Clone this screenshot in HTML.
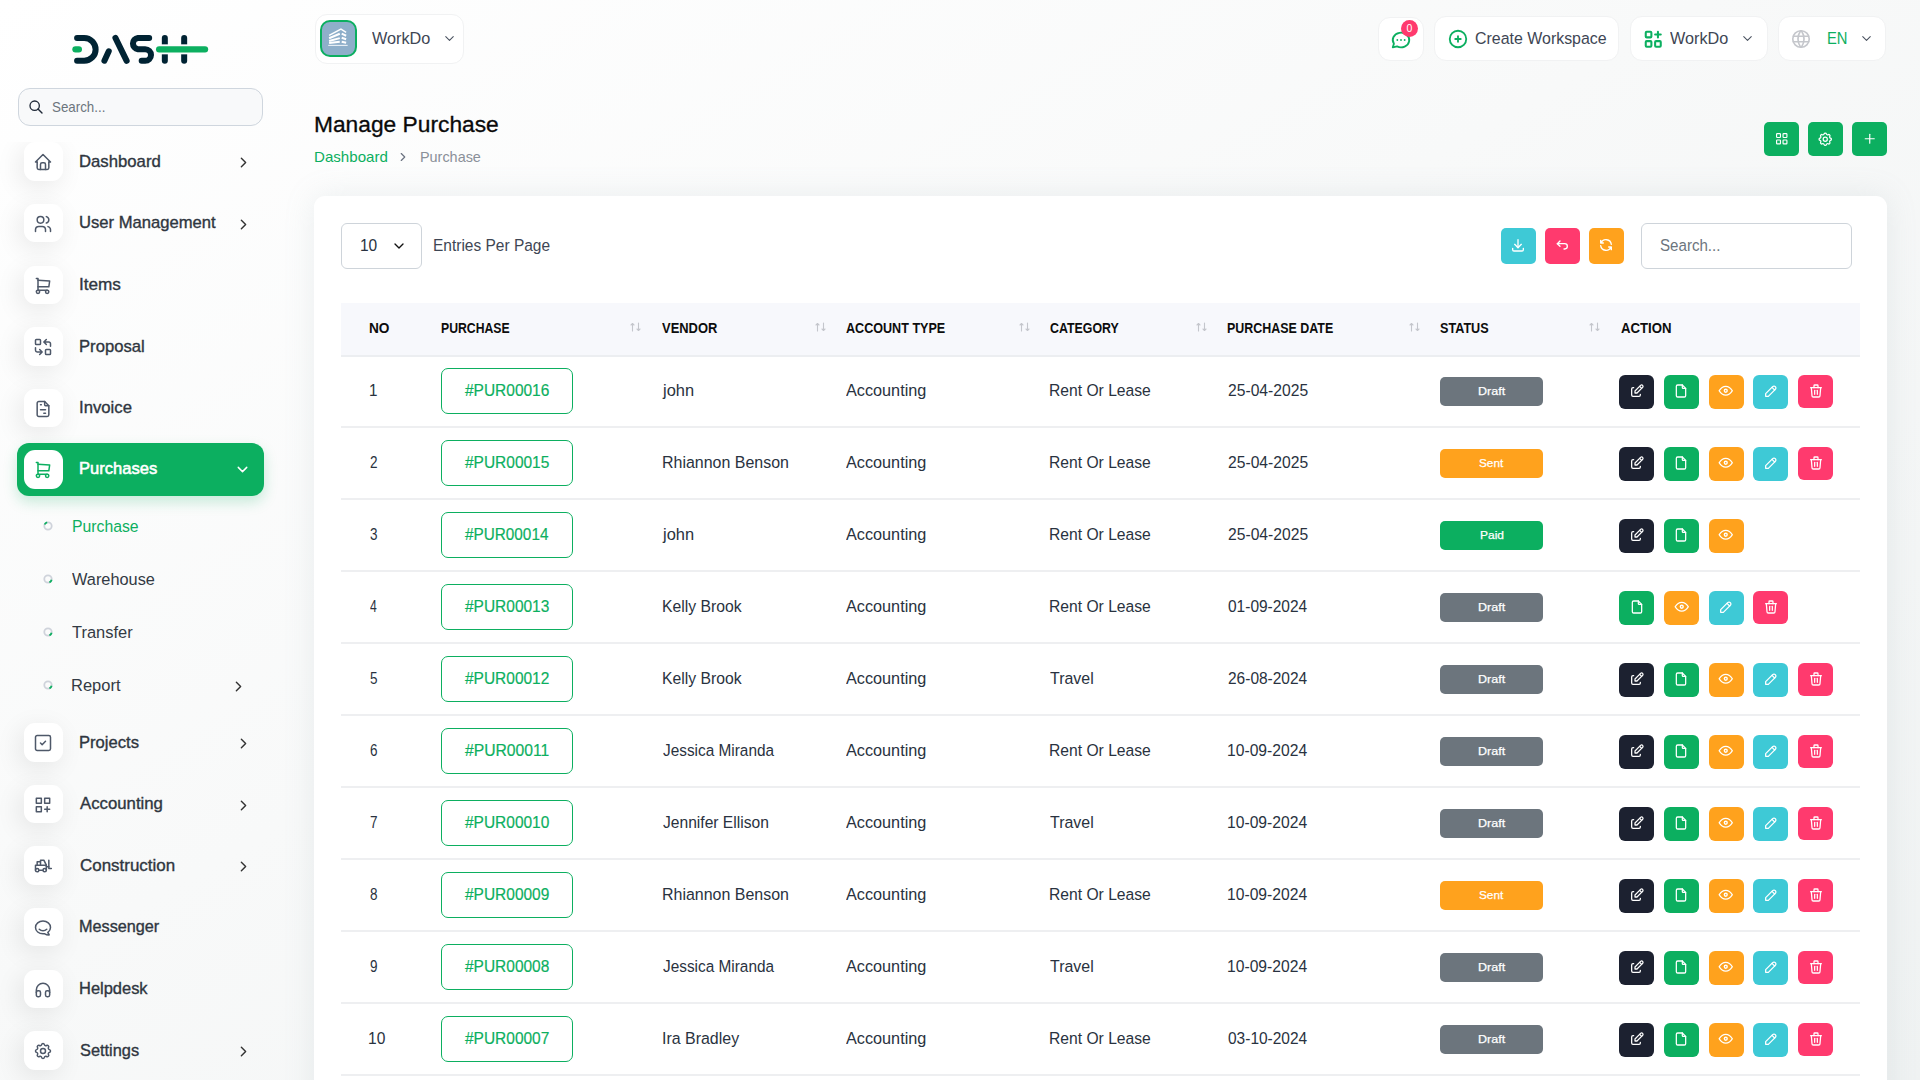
<!DOCTYPE html>
<html><head><meta charset="utf-8"><title>Manage Purchase</title>
<style>
html,body{margin:0;padding:0}
body{width:1920px;height:1080px;overflow:hidden;position:relative;font-family:"Liberation Sans",sans-serif;
background:linear-gradient(150deg,#ffffff 0%,#f8f9f9 45%,#eff2f2 100%)}
.t{position:absolute;line-height:1;white-space:nowrap;transform-origin:0 0}
svg{display:block}
</style></head><body>
<svg style="position:absolute;left:60px;top:20px" width="160" height="60" viewBox="0 0 1920 720" fill="none" stroke-linecap="round" stroke-linejoin="round">
<g stroke="#002333" stroke-width="72">
<path d="M205 215H290A137 137 0 0 1 290 490H205"/>
<path d="M533 488L585 375"/>
<path d="M665 215L800 490"/>
<path d="M1070 215H935A68 68 0 0 0 935 350H1022A70 70 0 0 1 1022 490H980"/>
<path d="M1258 215V490"/><path d="M1490 215V490"/>
</g>
<rect x="1200" y="292" width="340" height="120" fill="#fdfdfd"/>
<g stroke="#0caf60" stroke-width="76">
<path d="M186 352H226"/><path d="M1190 352H1740"/>
</g></svg><div style="position:absolute;left:18px;top:88px;width:245px;height:37.5px;box-sizing:border-box;border:1px solid #cfd6de;border-radius:12px;background:#f8f9fa"></div><svg style="position:absolute;left:28.00px;top:98.50px;" width="16" height="16" viewBox="0 0 24 24" fill="none" stroke="#1f2937" stroke-width="2" stroke-linecap="round" stroke-linejoin="round"><path d="M10 10m-7 0a7 7 0 1 0 14 0a7 7 0 1 0 -14 0"/><path d="M21 21l-6 -6"/></svg><div class="t" style="left:51.70px;top:100px;font-size:14.6px;font-weight:400;color:#6c757d;transform:scaleX(0.9137);">Search...</div><div style="position:absolute;left:0;top:142px;width:300px;height:938px;overflow:hidden"><div style="position:absolute;left:0;top:-142px;width:300px;height:1080px"><div style="position:absolute;left:24px;top:142.29999999999998px;width:38.6px;height:38.6px;background:#fff;border-radius:11px;box-shadow:-4px 6px 26px rgba(0,0,0,0.085)"></div><svg style="position:absolute;left:33.30px;top:152.30px;" width="20" height="20" viewBox="0 0 24 24" fill="none" stroke="#4e5869" stroke-width="1.8" stroke-linecap="round" stroke-linejoin="round"><path d="M5 12l-2 0l9 -9l9 9l-2 0"/><path d="M5 12v7a2 2 0 0 0 2 2h10a2 2 0 0 0 2 -2v-7"/><path d="M9 21v-6a2 2 0 0 1 2 -2h2a2 2 0 0 1 2 2v6"/></svg><div class="t" style="left:78.68px;top:153px;font-size:16.4px;font-weight:400;color:#2f3640;transform:scaleX(1.0194);-webkit-text-stroke:0.35px #2f3640;">Dashboard</div><svg style="position:absolute;left:235.20px;top:154.40px;" width="17" height="17" viewBox="0 0 24 24" fill="none" stroke="#333333" stroke-width="2" stroke-linecap="round" stroke-linejoin="round"><path d="M9 6l6 6l-6 6"/></svg><div style="position:absolute;left:24px;top:203.89999999999998px;width:38.6px;height:38.6px;background:#fff;border-radius:11px;box-shadow:-4px 6px 26px rgba(0,0,0,0.085)"></div><svg style="position:absolute;left:33.30px;top:213.90px;" width="20" height="20" viewBox="0 0 24 24" fill="none" stroke="#4e5869" stroke-width="1.8" stroke-linecap="round" stroke-linejoin="round"><path d="M9 7m-4 0a4 4 0 1 0 8 0a4 4 0 1 0 -8 0"/><path d="M3 21v-2a4 4 0 0 1 4 -4h4a4 4 0 0 1 4 4v2"/><path d="M16 3.13a4 4 0 0 1 0 7.75"/><path d="M21 21v-2a4 4 0 0 0 -3 -3.85"/></svg><div class="t" style="left:78.69px;top:214px;font-size:16.4px;font-weight:400;color:#2f3640;transform:scaleX(1.0128);-webkit-text-stroke:0.35px #2f3640;">User Management</div><svg style="position:absolute;left:235.20px;top:216.00px;" width="17" height="17" viewBox="0 0 24 24" fill="none" stroke="#333333" stroke-width="2" stroke-linecap="round" stroke-linejoin="round"><path d="M9 6l6 6l-6 6"/></svg><div style="position:absolute;left:24px;top:265.5px;width:38.6px;height:38.6px;background:#fff;border-radius:11px;box-shadow:-4px 6px 26px rgba(0,0,0,0.085)"></div><svg style="position:absolute;left:33.30px;top:275.50px;" width="20" height="20" viewBox="0 0 24 24" fill="none" stroke="#4e5869" stroke-width="1.8" stroke-linecap="round" stroke-linejoin="round"><path d="M6 19m-2 0a2 2 0 1 0 4 0a2 2 0 1 0 -4 0"/><path d="M17 19m-2 0a2 2 0 1 0 4 0a2 2 0 1 0 -4 0"/><path d="M17 17h-11v-14h-2"/><path d="M6 5l14 1l-1 7h-13"/></svg><div class="t" style="left:78.65px;top:276px;font-size:16.4px;font-weight:400;color:#2f3640;transform:scaleX(1.0469);-webkit-text-stroke:0.35px #2f3640;">Items</div><div style="position:absolute;left:24px;top:327.09999999999997px;width:38.6px;height:38.6px;background:#fff;border-radius:11px;box-shadow:-4px 6px 26px rgba(0,0,0,0.085)"></div><svg style="position:absolute;left:33.30px;top:337.10px;" width="20" height="20" viewBox="0 0 24 24" fill="none" stroke="#4e5869" stroke-width="1.8" stroke-linecap="round" stroke-linejoin="round"><path d="M3 3m0 1a1 1 0 0 1 1 -1h4a1 1 0 0 1 1 1v4a1 1 0 0 1 -1 1h-4a1 1 0 0 1 -1 -1z"/><path d="M15 15m0 1a1 1 0 0 1 1 -1h4a1 1 0 0 1 1 1v4a1 1 0 0 1 -1 1h-4a1 1 0 0 1 -1 -1z"/><path d="M21 11v-3a2 2 0 0 0 -2 -2h-6l3 3m0 -6l-3 3"/><path d="M3 13v3a2 2 0 0 0 2 2h6l-3 -3m0 6l3 -3"/></svg><div class="t" style="left:78.68px;top:338px;font-size:16.4px;font-weight:400;color:#2f3640;transform:scaleX(1.0151);-webkit-text-stroke:0.35px #2f3640;">Proposal</div><div style="position:absolute;left:24px;top:388.7px;width:38.6px;height:38.6px;background:#fff;border-radius:11px;box-shadow:-4px 6px 26px rgba(0,0,0,0.085)"></div><svg style="position:absolute;left:33.30px;top:398.70px;" width="20" height="20" viewBox="0 0 24 24" fill="none" stroke="#4e5869" stroke-width="1.8" stroke-linecap="round" stroke-linejoin="round"><path d="M14 3v4a1 1 0 0 0 1 1h4"/><path d="M17 21h-10a2 2 0 0 1 -2 -2v-14a2 2 0 0 1 2 -2h7l5 5v11a2 2 0 0 1 -2 2z"/><path d="M9 7l1 0"/><path d="M9 13l6 0"/><path d="M13 17l2 0"/></svg><div class="t" style="left:78.68px;top:399px;font-size:16.4px;font-weight:400;color:#2f3640;transform:scaleX(1.0193);-webkit-text-stroke:0.35px #2f3640;">Invoice</div><div style="position:absolute;left:17px;top:442.9px;width:247px;height:53px;background:#0caf60;border-radius:12px;box-shadow:0 6px 14px rgba(12,175,96,0.22)"></div><div style="position:absolute;left:24px;top:450.09999999999997px;width:38.6px;height:38.6px;background:#fff;border-radius:11px;"></div><svg style="position:absolute;left:33.30px;top:460.10px;" width="20" height="20" viewBox="0 0 24 24" fill="none" stroke="#0caf60" stroke-width="1.8" stroke-linecap="round" stroke-linejoin="round"><path d="M6 19m-2 0a2 2 0 1 0 4 0a2 2 0 1 0 -4 0"/><path d="M17 19m-2 0a2 2 0 1 0 4 0a2 2 0 1 0 -4 0"/><path d="M17 17h-11v-14h-2"/><path d="M6 5l14 1l-1 7h-13"/></svg><div class="t" style="left:79.19px;top:460px;font-size:16.4px;font-weight:400;color:#fff;transform:scaleX(1.0099);-webkit-text-stroke:0.55px #fff;">Purchases</div><svg style="position:absolute;left:233.80px;top:460.90px;" width="17" height="17" viewBox="0 0 24 24" fill="none" stroke="#fff" stroke-width="2" stroke-linecap="round" stroke-linejoin="round"><path d="M6 9l6 6l6 -6"/></svg><svg style="position:absolute;left:42.3px;top:520.2px" width="12" height="12" viewBox="0 0 12 12"><circle cx="6" cy="6" r="3.7" fill="none" stroke="#cfd3db" stroke-width="1.8"/><path d="M2.6 4.5A3.7 3.7 0 0 1 5.2 2.4" fill="none" stroke="#0caf60" stroke-width="1.8"/></svg><div class="t" style="left:71.97px;top:519px;font-size:16.9px;font-weight:400;color:#0caf60;transform:scaleX(0.9334);">Purchase</div><svg style="position:absolute;left:42.3px;top:573.2px" width="12" height="12" viewBox="0 0 12 12"><circle cx="6" cy="6" r="3.7" fill="none" stroke="#cfd3db" stroke-width="1.8"/><path d="M9.6 6.8A3.7 3.7 0 0 1 7.4 9.4" fill="none" stroke="#0caf60" stroke-width="1.8"/></svg><div class="t" style="left:71.80px;top:572px;font-size:16.9px;font-weight:400;color:#333a44;transform:scaleX(0.9666);">Warehouse</div><svg style="position:absolute;left:42.3px;top:626.2px" width="12" height="12" viewBox="0 0 12 12"><circle cx="6" cy="6" r="3.7" fill="none" stroke="#cfd3db" stroke-width="1.8"/><path d="M9.6 6.8A3.7 3.7 0 0 1 7.4 9.4" fill="none" stroke="#0caf60" stroke-width="1.8"/></svg><div class="t" style="left:71.80px;top:625px;font-size:16.9px;font-weight:400;color:#333a44;transform:scaleX(0.9739);">Transfer</div><svg style="position:absolute;left:42.3px;top:679.2px" width="12" height="12" viewBox="0 0 12 12"><circle cx="6" cy="6" r="3.7" fill="none" stroke="#cfd3db" stroke-width="1.8"/><path d="M9.6 6.8A3.7 3.7 0 0 1 7.4 9.4" fill="none" stroke="#0caf60" stroke-width="1.8"/></svg><div class="t" style="left:70.82px;top:678px;font-size:16.9px;font-weight:400;color:#333a44;transform:scaleX(0.9759);">Report</div><svg style="position:absolute;left:230.20px;top:677.80px;" width="17" height="17" viewBox="0 0 24 24" fill="none" stroke="#333333" stroke-width="2" stroke-linecap="round" stroke-linejoin="round"><path d="M9 6l6 6l-6 6"/></svg><div style="position:absolute;left:24px;top:723.1px;width:38.6px;height:38.6px;background:#fff;border-radius:11px;box-shadow:-4px 6px 26px rgba(0,0,0,0.085)"></div><svg style="position:absolute;left:33.30px;top:733.10px;" width="20" height="20" viewBox="0 0 24 24" fill="none" stroke="#4e5869" stroke-width="1.8" stroke-linecap="round" stroke-linejoin="round"><path d="M3 5a2 2 0 0 1 2 -2h14a2 2 0 0 1 2 2v14a2 2 0 0 1 -2 2h-14a2 2 0 0 1 -2 -2v-14z"/><path d="M9 12l2 2l4 -4"/></svg><div class="t" style="left:78.69px;top:734px;font-size:16.4px;font-weight:400;color:#2f3640;transform:scaleX(1.0136);-webkit-text-stroke:0.35px #2f3640;">Projects</div><svg style="position:absolute;left:235.20px;top:735.20px;" width="17" height="17" viewBox="0 0 24 24" fill="none" stroke="#333333" stroke-width="2" stroke-linecap="round" stroke-linejoin="round"><path d="M9 6l6 6l-6 6"/></svg><div style="position:absolute;left:24px;top:784.7px;width:38.6px;height:38.6px;background:#fff;border-radius:11px;box-shadow:-4px 6px 26px rgba(0,0,0,0.085)"></div><svg style="position:absolute;left:33.30px;top:794.70px;" width="20" height="20" viewBox="0 0 24 24" fill="none" stroke="#4e5869" stroke-width="1.8" stroke-linecap="round" stroke-linejoin="round"><path d="M4 4h6v6h-6z"/><path d="M14 4h6v6h-6z"/><path d="M4 14h6v6h-6z"/><path d="M14 17h6m-3 -3v6"/></svg><div class="t" style="left:79.70px;top:795px;font-size:16.4px;font-weight:400;color:#2f3640;transform:scaleX(1.0225);-webkit-text-stroke:0.35px #2f3640;">Accounting</div><svg style="position:absolute;left:235.20px;top:796.80px;" width="17" height="17" viewBox="0 0 24 24" fill="none" stroke="#333333" stroke-width="2" stroke-linecap="round" stroke-linejoin="round"><path d="M9 6l6 6l-6 6"/></svg><div style="position:absolute;left:24px;top:846.3000000000001px;width:38.6px;height:38.6px;background:#fff;border-radius:11px;box-shadow:-4px 6px 26px rgba(0,0,0,0.085)"></div><svg style="position:absolute;left:33.30px;top:856.30px;" width="20" height="20" viewBox="0 0 24 24" fill="none" stroke="#4e5869" stroke-width="1.8" stroke-linecap="round" stroke-linejoin="round"><path d="M5 17m-2 0a2 2 0 1 0 4 0a2 2 0 1 0 -4 0"/><path d="M14 17m-2 0a2 2 0 1 0 4 0a2 2 0 1 0 -4 0"/><path d="M7 17l5 0"/><path d="M3 17v-6h13v6"/><path d="M5 11v-4h4"/><path d="M9 11v-6h4l3 6"/><path d="M22 15h-3v-10"/><path d="M16 13l3 0"/></svg><div class="t" style="left:79.70px;top:857px;font-size:16.4px;font-weight:400;color:#2f3640;transform:scaleX(1.0338);-webkit-text-stroke:0.35px #2f3640;">Construction</div><svg style="position:absolute;left:235.20px;top:858.40px;" width="17" height="17" viewBox="0 0 24 24" fill="none" stroke="#333333" stroke-width="2" stroke-linecap="round" stroke-linejoin="round"><path d="M9 6l6 6l-6 6"/></svg><div style="position:absolute;left:24px;top:907.9000000000001px;width:38.6px;height:38.6px;background:#fff;border-radius:11px;box-shadow:-4px 6px 26px rgba(0,0,0,0.085)"></div><svg style="position:absolute;left:33.30px;top:917.90px;" width="20" height="20" viewBox="0 0 24 24" fill="none" stroke="#4e5869" stroke-width="1.8" stroke-linecap="round" stroke-linejoin="round"><path d="M17.802 17.292s.077 -.055 .2 -.149c1.843 -1.425 3 -3.49 3 -5.789c0 -4.286 -4.03 -7.764 -9 -7.764c-4.97 0 -9 3.478 -9 7.764c0 4.288 4.03 7.646 9 7.646c.424 0 1.12 -.028 2.088 -.084c1.262 .82 3.104 1.493 4.716 1.493c.499 0 .734 -.41 .414 -.828c-.486 -.596 -1.156 -1.551 -1.416 -2.29z"/><path d="M7.5 13.5c2.5 2.5 6.5 2.5 9 0"/></svg><div class="t" style="left:78.71px;top:918px;font-size:16.4px;font-weight:400;color:#2f3640;transform:scaleX(0.9898);-webkit-text-stroke:0.35px #2f3640;">Messenger</div><div style="position:absolute;left:24px;top:969.5px;width:38.6px;height:38.6px;background:#fff;border-radius:11px;box-shadow:-4px 6px 26px rgba(0,0,0,0.085)"></div><svg style="position:absolute;left:33.30px;top:979.50px;" width="20" height="20" viewBox="0 0 24 24" fill="none" stroke="#4e5869" stroke-width="1.8" stroke-linecap="round" stroke-linejoin="round"><path d="M4 13m0 2a2 2 0 0 1 2 -2h1a2 2 0 0 1 2 2v3a2 2 0 0 1 -2 2h-1a2 2 0 0 1 -2 -2z"/><path d="M15 13m0 2a2 2 0 0 1 2 -2h1a2 2 0 0 1 2 2v3a2 2 0 0 1 -2 2h-1a2 2 0 0 1 -2 -2z"/><path d="M4 15v-3a8 8 0 0 1 16 0v3"/></svg><div class="t" style="left:78.70px;top:980px;font-size:16.4px;font-weight:400;color:#2f3640;transform:scaleX(1.0039);-webkit-text-stroke:0.35px #2f3640;">Helpdesk</div><div style="position:absolute;left:24px;top:1031.1000000000001px;width:38.6px;height:38.6px;background:#fff;border-radius:11px;box-shadow:-4px 6px 26px rgba(0,0,0,0.085)"></div><svg style="position:absolute;left:33.30px;top:1041.10px;" width="20" height="20" viewBox="0 0 24 24" fill="none" stroke="#4e5869" stroke-width="1.8" stroke-linecap="round" stroke-linejoin="round"><path d="M10.325 4.317c.426 -1.756 2.924 -1.756 3.35 0a1.724 1.724 0 0 0 2.573 1.066c1.543 -.94 3.31 .826 2.37 2.37a1.724 1.724 0 0 0 1.065 2.572c1.756 .426 1.756 2.924 0 3.35a1.724 1.724 0 0 0 -1.066 2.573c.94 1.543 -.826 3.31 -2.37 2.37a1.724 1.724 0 0 0 -2.572 1.065c-.426 1.756 -2.924 1.756 -3.35 0a1.724 1.724 0 0 0 -2.573 -1.066c-1.543 .94 -3.31 -.826 -2.37 -2.37a1.724 1.724 0 0 0 -1.065 -2.572c-1.756 -.426 -1.756 -2.924 0 -3.35a1.724 1.724 0 0 0 1.066 -2.573c-.94 -1.543 .826 -3.31 2.37 -2.37c1 .608 2.296 .07 2.572 -1.065z"/><path d="M9 12a3 3 0 1 0 6 0a3 3 0 0 0 -6 0"/></svg><div class="t" style="left:79.70px;top:1042px;font-size:16.4px;font-weight:400;color:#2f3640;transform:scaleX(0.9978);-webkit-text-stroke:0.35px #2f3640;">Settings</div><svg style="position:absolute;left:235.20px;top:1043.20px;" width="17" height="17" viewBox="0 0 24 24" fill="none" stroke="#333333" stroke-width="2" stroke-linecap="round" stroke-linejoin="round"><path d="M9 6l6 6l-6 6"/></svg></div></div><div style="position:absolute;left:314.5px;top:13.5px;width:149px;height:50px;background:#fff;border-radius:12px;box-sizing:border-box;border:1px solid #f1f2f3"></div><div style="position:absolute;left:320px;top:20px;width:37px;height:37px;box-sizing:border-box;border:2px solid #0caf60;border-radius:10px;background:#8eafca"></div><svg style="position:absolute;left:322px;top:22px" width="32" height="32" viewBox="0 0 1080 1080" fill="none" stroke="#fff">
<path d="M240 450L640 240L815 350" stroke-width="45"/>
<path d="M240 548L600 398M665 395L815 465" stroke-width="68"/>
<path d="M240 642L600 545M665 530L815 580" stroke-width="68"/>
<path d="M240 712L600 668M665 665L815 700" stroke-width="68"/>
<path d="M210 790H865" stroke-width="38" stroke-opacity="0.8"/></svg><div class="t" style="left:372.30px;top:31px;font-size:16.9px;font-weight:400;color:#3e4654;transform:scaleX(0.9619);">WorkDo</div><svg style="position:absolute;left:442.20px;top:31.10px;" width="15" height="15" viewBox="0 0 24 24" fill="none" stroke="#4a5260" stroke-width="1.7" stroke-linecap="round" stroke-linejoin="round"><path d="M6 9l6 6l6 -6"/></svg><div style="position:absolute;left:1377.5px;top:17px;width:46.5px;height:43.5px;background:#fff;border-radius:12px;box-sizing:border-box;border:1px solid #f1f2f3"></div><svg style="position:absolute;left:1390.00px;top:29.20px;" width="22" height="22" viewBox="0 0 24 24" fill="none" stroke="#0caf60" stroke-width="2" stroke-linecap="round" stroke-linejoin="round"><path d="M3 20l1.3 -3.9a9 8 0 1 1 3.4 2.9l-4.7 1"/><path d="M12 12l0 .01"/><path d="M8 12l0 .01"/><path d="M16 12l0 .01"/></svg><div style="position:absolute;left:1401px;top:19.9px;width:17px;height:17px;border-radius:50%;background:#ff3a6e;color:#fff;font-size:10.5px;line-height:17px;text-align:center;font-family:'Liberation Sans',sans-serif">0</div><div style="position:absolute;left:1434.3px;top:16px;width:184.7px;height:45px;background:#fff;border-radius:12px;box-sizing:border-box;border:1px solid #f1f2f3"></div><svg style="position:absolute;left:1446.50px;top:28.00px;" width="22" height="22" viewBox="0 0 24 24" fill="none" stroke="#0caf60" stroke-width="2" stroke-linecap="round" stroke-linejoin="round"><path d="M3 12a9 9 0 1 0 18 0a9 9 0 0 0 -18 0"/><path d="M9 12h6"/><path d="M12 9v6"/></svg><div class="t" style="left:1475.00px;top:31px;font-size:16.9px;font-weight:400;color:#3e4654;transform:scaleX(0.9435);">Create Workspace</div><div style="position:absolute;left:1630.2px;top:16px;width:137.8px;height:45px;background:#fff;border-radius:12px;box-sizing:border-box;border:1px solid #f1f2f3"></div><svg style="position:absolute;left:1642.15px;top:28.05px;" width="22.5" height="22.5" viewBox="0 0 24 24" fill="none" stroke="#0caf60" stroke-width="2.2" stroke-linecap="round" stroke-linejoin="round"><path d="M4 4m0 1a1 1 0 0 1 1 -1h4a1 1 0 0 1 1 1v4a1 1 0 0 1 -1 1h-4a1 1 0 0 1 -1 -1z"/><path d="M4 14m0 1a1 1 0 0 1 1 -1h4a1 1 0 0 1 1 1v4a1 1 0 0 1 -1 1h-4a1 1 0 0 1 -1 -1z"/><path d="M14 14m0 1a1 1 0 0 1 1 -1h4a1 1 0 0 1 1 1v4a1 1 0 0 1 -1 1h-4a1 1 0 0 1 -1 -1z"/><path d="M14 7l6 0"/><path d="M17 4l0 6"/></svg><div class="t" style="left:1670.30px;top:31px;font-size:16.9px;font-weight:400;color:#3e4654;transform:scaleX(0.9602);">WorkDo</div><svg style="position:absolute;left:1740.00px;top:31.10px;" width="15" height="15" viewBox="0 0 24 24" fill="none" stroke="#4a5260" stroke-width="1.7" stroke-linecap="round" stroke-linejoin="round"><path d="M6 9l6 6l6 -6"/></svg><div style="position:absolute;left:1778.2px;top:16px;width:107.5px;height:45px;background:#fff;border-radius:12px;box-sizing:border-box;border:1px solid #f1f2f3"></div><svg style="position:absolute;left:1790.10px;top:28.00px;" width="22" height="22" viewBox="0 0 24 24" fill="none" stroke="#c5c7cc" stroke-width="1.8" stroke-linecap="round" stroke-linejoin="round"><path d="M3 12a9 9 0 1 0 18 0a9 9 0 0 0 -18 0"/><path d="M3.6 9h16.8"/><path d="M3.6 15h16.8"/><path d="M11.5 3a17 17 0 0 0 0 18"/><path d="M12.5 3a17 17 0 0 1 0 18"/></svg><div class="t" style="left:1826.94px;top:30px;font-size:17.1px;font-weight:400;color:#0caf60;transform:scaleX(0.8644);">EN</div><svg style="position:absolute;left:1858.90px;top:31.10px;" width="15" height="15" viewBox="0 0 24 24" fill="none" stroke="#4a5260" stroke-width="1.7" stroke-linecap="round" stroke-linejoin="round"><path d="M6 9l6 6l6 -6"/></svg><div class="t" style="left:313.79px;top:114px;font-size:22.6px;font-weight:400;color:#0a0a0a;transform:scaleX(1.0076);-webkit-text-stroke:0.3px #0a0a0a;">Manage Purchase</div><div class="t" style="left:313.53px;top:150px;font-size:14.1px;font-weight:400;color:#0caf60;transform:scaleX(1.0714);">Dashboard</div><svg style="position:absolute;left:396.40px;top:150.30px;" width="14" height="14" viewBox="0 0 24 24" fill="none" stroke="#6b7280" stroke-width="2" stroke-linecap="round" stroke-linejoin="round"><path d="M9 6l6 6l-6 6"/></svg><div class="t" style="left:419.98px;top:150px;font-size:14.1px;font-weight:400;color:#8a9099;transform:scaleX(1.0221);">Purchase</div><div style="position:absolute;left:1764px;top:122px;width:35px;height:34px;background:#0caf60;border-radius:5px"></div><svg style="position:absolute;left:1773.75px;top:131.25px;" width="15.5" height="15.5" viewBox="0 0 24 24" fill="none" stroke="#fff" stroke-width="1.8" stroke-linecap="round" stroke-linejoin="round"><path d="M4 4m0 1a1 1 0 0 1 1 -1h4a1 1 0 0 1 1 1v4a1 1 0 0 1 -1 1h-4a1 1 0 0 1 -1 -1z"/><path d="M14 4m0 1a1 1 0 0 1 1 -1h4a1 1 0 0 1 1 1v4a1 1 0 0 1 -1 1h-4a1 1 0 0 1 -1 -1z"/><path d="M4 14m0 1a1 1 0 0 1 1 -1h4a1 1 0 0 1 1 1v4a1 1 0 0 1 -1 1h-4a1 1 0 0 1 -1 -1z"/><path d="M14 14m0 1a1 1 0 0 1 1 -1h4a1 1 0 0 1 1 1v4a1 1 0 0 1 -1 1h-4a1 1 0 0 1 -1 -1z"/></svg><div style="position:absolute;left:1808px;top:122px;width:35px;height:34px;background:#0caf60;border-radius:5px"></div><svg style="position:absolute;left:1817.25px;top:130.75px;" width="16.5" height="16.5" viewBox="0 0 24 24" fill="none" stroke="#fff" stroke-width="1.8" stroke-linecap="round" stroke-linejoin="round"><path d="M10.325 4.317c.426 -1.756 2.924 -1.756 3.35 0a1.724 1.724 0 0 0 2.573 1.066c1.543 -.94 3.31 .826 2.37 2.37a1.724 1.724 0 0 0 1.065 2.572c1.756 .426 1.756 2.924 0 3.35a1.724 1.724 0 0 0 -1.066 2.573c.94 1.543 -.826 3.31 -2.37 2.37a1.724 1.724 0 0 0 -2.572 1.065c-.426 1.756 -2.924 1.756 -3.35 0a1.724 1.724 0 0 0 -2.573 -1.066c-1.543 .94 -3.31 -.826 -2.37 -2.37a1.724 1.724 0 0 0 -1.065 -2.572c-1.756 -.426 -1.756 -2.924 0 -3.35a1.724 1.724 0 0 0 1.066 -2.573c-.94 -1.543 .826 -3.31 2.37 -2.37c1 .608 2.296 .07 2.572 -1.065z"/><path d="M9 12a3 3 0 1 0 6 0a3 3 0 0 0 -6 0"/></svg><div style="position:absolute;left:1852px;top:122px;width:35px;height:34px;background:#0caf60;border-radius:5px"></div><svg style="position:absolute;left:1861.75px;top:131.25px;" width="15.5" height="15.5" viewBox="0 0 24 24" fill="none" stroke="#fff" stroke-width="1.8" stroke-linecap="round" stroke-linejoin="round"><path d="M12 5l0 14"/><path d="M5 12l14 0"/></svg><div style="position:absolute;left:314px;top:196px;width:1573px;height:1000px;background:#fff;border-radius:11px;box-shadow:0 0 30px rgba(150,165,170,0.17)"></div><div style="position:absolute;left:341.3px;top:223.2px;width:81.2px;height:45.4px;box-sizing:border-box;border:1px solid #ced4da;border-radius:6px;background:#fff"></div><div class="t" style="left:359.57px;top:238px;font-size:16.6px;font-weight:400;color:#293240;transform:scaleX(0.9345);">10</div><svg style="position:absolute;left:391.00px;top:238.00px;" width="16" height="16" viewBox="0 0 24 24" fill="none" stroke="#111" stroke-width="2" stroke-linecap="round" stroke-linejoin="round"><path d="M6 9l6 6l6 -6"/></svg><div class="t" style="left:433.27px;top:238px;font-size:16.7px;font-weight:400;color:#3e4654;transform:scaleX(0.9282);">Entries Per Page</div><div style="position:absolute;left:1501px;top:228px;width:35px;height:36px;background:#3ec9d6;border-radius:5px"></div><svg style="position:absolute;left:1510.00px;top:237.30px;" width="16" height="16" viewBox="0 0 24 24" fill="none" stroke="#fff" stroke-width="2" stroke-linecap="round" stroke-linejoin="round"><path d="M4 17v2a2 2 0 0 0 2 2h12a2 2 0 0 0 2 -2v-2"/><path d="M7 11l5 5l5 -5"/><path d="M12 4l0 12"/></svg><div style="position:absolute;left:1545px;top:228px;width:35px;height:36px;background:#ff3a6e;border-radius:5px"></div><svg style="position:absolute;left:1554.00px;top:237.30px;" width="16" height="16" viewBox="0 0 24 24" fill="none" stroke="#fff" stroke-width="2" stroke-linecap="round" stroke-linejoin="round"><path d="M9 14l-4 -4l4 -4"/><path d="M5 10h11a4 4 0 1 1 0 8h-1"/></svg><div style="position:absolute;left:1589px;top:228px;width:35px;height:36px;background:#ffa21d;border-radius:5px"></div><svg style="position:absolute;left:1598.00px;top:237.30px;" width="16" height="16" viewBox="0 0 24 24" fill="none" stroke="#fff" stroke-width="2" stroke-linecap="round" stroke-linejoin="round"><path d="M20 11a8.1 8.1 0 0 0 -15.5 -2m-.5 -4v4h4"/><path d="M4 13a8.1 8.1 0 0 0 15.5 2m.5 4v-4h-4"/></svg><div style="position:absolute;left:1641.4px;top:223.3px;width:210.2px;height:45.3px;box-sizing:border-box;border:1px solid #ced4da;border-radius:6px;background:#fff"></div><div class="t" style="left:1659.50px;top:237px;font-size:17.1px;font-weight:400;color:#6c757d;transform:scaleX(0.8838);">Search...</div><div style="position:absolute;left:341px;top:303px;width:1519px;height:51.5px;background:#f7f8fc"></div><div style="position:absolute;left:341px;top:354.5px;width:1519px;height:2px;background:#eceef1"></div><div class="t" style="left:368.50px;top:322px;font-size:13.9px;font-weight:700;color:#0d0d0d;transform:scaleX(0.9842);">NO</div><div class="t" style="left:441.20px;top:322px;font-size:13.9px;font-weight:700;color:#0d0d0d;transform:scaleX(0.8805);">PURCHASE</div><div class="t" style="left:661.90px;top:322px;font-size:13.9px;font-weight:700;color:#0d0d0d;transform:scaleX(0.9310);">VENDOR</div><div class="t" style="left:846.30px;top:322px;font-size:13.9px;font-weight:700;color:#0d0d0d;transform:scaleX(0.9056);">ACCOUNT TYPE</div><div class="t" style="left:1050.00px;top:322px;font-size:13.9px;font-weight:700;color:#0d0d0d;transform:scaleX(0.8908);">CATEGORY</div><div class="t" style="left:1227.40px;top:322px;font-size:13.9px;font-weight:700;color:#0d0d0d;transform:scaleX(0.8958);">PURCHASE DATE</div><div class="t" style="left:1440.00px;top:322px;font-size:13.9px;font-weight:700;color:#0d0d0d;transform:scaleX(0.9092);">STATUS</div><div class="t" style="left:1620.50px;top:322px;font-size:13.9px;font-weight:700;color:#0d0d0d;transform:scaleX(0.9490);">ACTION</div><svg style="position:absolute;left:629.7px;top:322px" width="12" height="10" viewBox="0 0 12 10" fill="none" stroke="#c4c6cc" stroke-width="1.1" stroke-linecap="round" stroke-linejoin="round"><path d="M2.5 9V1.5M1 3L2.5 1.5L4 3"/><path d="M8.5 1V8.5M7 7L8.5 8.5L10 7"/></svg><svg style="position:absolute;left:814.6px;top:322px" width="12" height="10" viewBox="0 0 12 10" fill="none" stroke="#c4c6cc" stroke-width="1.1" stroke-linecap="round" stroke-linejoin="round"><path d="M2.5 9V1.5M1 3L2.5 1.5L4 3"/><path d="M8.5 1V8.5M7 7L8.5 8.5L10 7"/></svg><svg style="position:absolute;left:1018.7px;top:322px" width="12" height="10" viewBox="0 0 12 10" fill="none" stroke="#c4c6cc" stroke-width="1.1" stroke-linecap="round" stroke-linejoin="round"><path d="M2.5 9V1.5M1 3L2.5 1.5L4 3"/><path d="M8.5 1V8.5M7 7L8.5 8.5L10 7"/></svg><svg style="position:absolute;left:1195.9px;top:322px" width="12" height="10" viewBox="0 0 12 10" fill="none" stroke="#c4c6cc" stroke-width="1.1" stroke-linecap="round" stroke-linejoin="round"><path d="M2.5 9V1.5M1 3L2.5 1.5L4 3"/><path d="M8.5 1V8.5M7 7L8.5 8.5L10 7"/></svg><svg style="position:absolute;left:1408.7px;top:322px" width="12" height="10" viewBox="0 0 12 10" fill="none" stroke="#c4c6cc" stroke-width="1.1" stroke-linecap="round" stroke-linejoin="round"><path d="M2.5 9V1.5M1 3L2.5 1.5L4 3"/><path d="M8.5 1V8.5M7 7L8.5 8.5L10 7"/></svg><svg style="position:absolute;left:1588.8px;top:322px" width="12" height="10" viewBox="0 0 12 10" fill="none" stroke="#c4c6cc" stroke-width="1.1" stroke-linecap="round" stroke-linejoin="round"><path d="M2.5 9V1.5M1 3L2.5 1.5L4 3"/><path d="M8.5 1V8.5M7 7L8.5 8.5L10 7"/></svg><div class="t" style="left:368.62px;top:382px;font-size:17.4px;font-weight:400;color:#293240;transform:scaleX(0.8750);">1</div><div style="position:absolute;left:441.2px;top:368.0px;width:131.6px;height:45.8px;box-sizing:border-box;border:1.5px solid #0caf60;border-radius:7px"></div><div class="t" style="left:464.90px;top:382px;font-size:17.2px;font-weight:400;color:#0caf60;transform:scaleX(0.9003);-webkit-text-stroke:0.2px #0caf60;">#PUR00016</div><div class="t" style="left:663.45px;top:382px;font-size:17.4px;font-weight:400;color:#293240;transform:scaleX(0.9456);">john</div><div class="t" style="left:846.40px;top:382px;font-size:17.4px;font-weight:400;color:#293240;transform:scaleX(0.9336);">Accounting</div><div class="t" style="left:1049.20px;top:382px;font-size:17.4px;font-weight:400;color:#293240;transform:scaleX(0.9001);">Rent Or Lease</div><div class="t" style="left:1227.70px;top:382px;font-size:17.4px;font-weight:400;color:#293240;transform:scaleX(0.9005);">25-04-2025</div><div style="position:absolute;left:1440.1px;top:377.0px;width:102.8px;height:29px;background:#6c757d;border-radius:5px"></div><div class="t" style="left:1477.90px;top:385px;font-size:11.6px;font-weight:400;color:#fff;transform:scaleX(1.0810);-webkit-text-stroke:0.25px #fff;">Draft</div><div style="position:absolute;left:1619.0px;top:375.0px;width:35px;height:34px;background:#1c2130;border-radius:6px"></div><svg style="position:absolute;left:1628.50px;top:383.00px;" width="16" height="16" viewBox="0 0 24 24" fill="none" stroke="#fff" stroke-width="1.9" stroke-linecap="round" stroke-linejoin="round"><path d="M7 7h-1a2 2 0 0 0 -2 2v9a2 2 0 0 0 2 2h9a2 2 0 0 0 2 -2v-1"/><path d="M20.385 6.585a2.1 2.1 0 0 0 -2.97 -2.97l-8.415 8.385v3h3l8.385 -8.415z"/><path d="M16 5l3 3"/></svg><div style="position:absolute;left:1663.75px;top:375.0px;width:35px;height:34px;background:#0caf60;border-radius:6px"></div><svg style="position:absolute;left:1673.25px;top:383.00px;" width="16" height="16" viewBox="0 0 24 24" fill="none" stroke="#fff" stroke-width="1.9" stroke-linecap="round" stroke-linejoin="round"><path d="M14 3v4a1 1 0 0 0 1 1h4"/><path d="M17 21h-10a2 2 0 0 1 -2 -2v-14a2 2 0 0 1 2 -2h7l5 5v11a2 2 0 0 1 -2 2z"/></svg><div style="position:absolute;left:1708.5px;top:375.0px;width:35px;height:34px;background:#ffa21d;border-radius:6px"></div><svg style="position:absolute;left:1717.25px;top:382.25px;" width="17.5" height="17.5" viewBox="0 0 24 24" fill="none" stroke="#fff" stroke-width="1.9" stroke-linecap="round" stroke-linejoin="round"><path d="M10 12a2 2 0 1 0 4 0a2 2 0 0 0 -4 0"/><path d="M21 12c-2.4 4 -5.4 6 -9 6c-3.6 0 -6.6 -2 -9 -6c2.4 -4 5.4 -6 9 -6c3.6 0 6.6 2 9 6"/></svg><div style="position:absolute;left:1753.25px;top:375.0px;width:35px;height:34px;background:#3ec9d6;border-radius:6px"></div><svg style="position:absolute;left:1762.75px;top:383.00px;" width="16" height="16" viewBox="0 0 24 24" fill="none" stroke="#fff" stroke-width="1.9" stroke-linecap="round" stroke-linejoin="round"><path d="M4 20h4l10.5 -10.5a2.828 2.828 0 1 0 -4 -4l-10.5 10.5v4"/><path d="M13.5 6.5l4 4"/></svg><div style="position:absolute;left:1798.0px;top:375.0px;width:35px;height:33px;background:#ff3a6e;border-radius:6px"></div><svg style="position:absolute;left:1807.50px;top:383.00px;" width="16" height="16" viewBox="0 0 24 24" fill="none" stroke="#fff" stroke-width="1.9" stroke-linecap="round" stroke-linejoin="round"><path d="M4 7l16 0"/><path d="M10 11l0 6"/><path d="M14 11l0 6"/><path d="M5 7l1 12a2 2 0 0 0 2 2h8a2 2 0 0 0 2 -2l1 -12"/><path d="M9 7v-3a1 1 0 0 1 1 -1h4a1 1 0 0 1 1 1v3"/></svg><div style="position:absolute;left:341px;top:426.0px;width:1519px;height:2px;background:#eeeff1"></div><div class="t" style="left:369.50px;top:454px;font-size:17.4px;font-weight:400;color:#293240;transform:scaleX(0.7778);">2</div><div style="position:absolute;left:441.2px;top:440.0px;width:131.6px;height:45.8px;box-sizing:border-box;border:1.5px solid #0caf60;border-radius:7px"></div><div class="t" style="left:464.90px;top:454px;font-size:17.2px;font-weight:400;color:#0caf60;transform:scaleX(0.9003);-webkit-text-stroke:0.2px #0caf60;">#PUR00015</div><div class="t" style="left:661.58px;top:454px;font-size:17.4px;font-weight:400;color:#293240;transform:scaleX(0.9180);">Rhiannon Benson</div><div class="t" style="left:846.40px;top:454px;font-size:17.4px;font-weight:400;color:#293240;transform:scaleX(0.9336);">Accounting</div><div class="t" style="left:1049.20px;top:454px;font-size:17.4px;font-weight:400;color:#293240;transform:scaleX(0.9001);">Rent Or Lease</div><div class="t" style="left:1227.70px;top:454px;font-size:17.4px;font-weight:400;color:#293240;transform:scaleX(0.9005);">25-04-2025</div><div style="position:absolute;left:1440.1px;top:449.0px;width:102.8px;height:29px;background:#ffa21d;border-radius:5px"></div><div class="t" style="left:1479.40px;top:457px;font-size:11.6px;font-weight:400;color:#fff;transform:scaleX(1.0151);-webkit-text-stroke:0.25px #fff;">Sent</div><div style="position:absolute;left:1619.0px;top:447.0px;width:35px;height:34px;background:#1c2130;border-radius:6px"></div><svg style="position:absolute;left:1628.50px;top:455.00px;" width="16" height="16" viewBox="0 0 24 24" fill="none" stroke="#fff" stroke-width="1.9" stroke-linecap="round" stroke-linejoin="round"><path d="M7 7h-1a2 2 0 0 0 -2 2v9a2 2 0 0 0 2 2h9a2 2 0 0 0 2 -2v-1"/><path d="M20.385 6.585a2.1 2.1 0 0 0 -2.97 -2.97l-8.415 8.385v3h3l8.385 -8.415z"/><path d="M16 5l3 3"/></svg><div style="position:absolute;left:1663.75px;top:447.0px;width:35px;height:34px;background:#0caf60;border-radius:6px"></div><svg style="position:absolute;left:1673.25px;top:455.00px;" width="16" height="16" viewBox="0 0 24 24" fill="none" stroke="#fff" stroke-width="1.9" stroke-linecap="round" stroke-linejoin="round"><path d="M14 3v4a1 1 0 0 0 1 1h4"/><path d="M17 21h-10a2 2 0 0 1 -2 -2v-14a2 2 0 0 1 2 -2h7l5 5v11a2 2 0 0 1 -2 2z"/></svg><div style="position:absolute;left:1708.5px;top:447.0px;width:35px;height:34px;background:#ffa21d;border-radius:6px"></div><svg style="position:absolute;left:1717.25px;top:454.25px;" width="17.5" height="17.5" viewBox="0 0 24 24" fill="none" stroke="#fff" stroke-width="1.9" stroke-linecap="round" stroke-linejoin="round"><path d="M10 12a2 2 0 1 0 4 0a2 2 0 0 0 -4 0"/><path d="M21 12c-2.4 4 -5.4 6 -9 6c-3.6 0 -6.6 -2 -9 -6c2.4 -4 5.4 -6 9 -6c3.6 0 6.6 2 9 6"/></svg><div style="position:absolute;left:1753.25px;top:447.0px;width:35px;height:34px;background:#3ec9d6;border-radius:6px"></div><svg style="position:absolute;left:1762.75px;top:455.00px;" width="16" height="16" viewBox="0 0 24 24" fill="none" stroke="#fff" stroke-width="1.9" stroke-linecap="round" stroke-linejoin="round"><path d="M4 20h4l10.5 -10.5a2.828 2.828 0 1 0 -4 -4l-10.5 10.5v4"/><path d="M13.5 6.5l4 4"/></svg><div style="position:absolute;left:1798.0px;top:447.0px;width:35px;height:33px;background:#ff3a6e;border-radius:6px"></div><svg style="position:absolute;left:1807.50px;top:455.00px;" width="16" height="16" viewBox="0 0 24 24" fill="none" stroke="#fff" stroke-width="1.9" stroke-linecap="round" stroke-linejoin="round"><path d="M4 7l16 0"/><path d="M10 11l0 6"/><path d="M14 11l0 6"/><path d="M5 7l1 12a2 2 0 0 0 2 2h8a2 2 0 0 0 2 -2l1 -12"/><path d="M9 7v-3a1 1 0 0 1 1 -1h4a1 1 0 0 1 1 1v3"/></svg><div style="position:absolute;left:341px;top:498.0px;width:1519px;height:2px;background:#eeeff1"></div><div class="t" style="left:369.50px;top:526px;font-size:17.4px;font-weight:400;color:#293240;transform:scaleX(0.7778);">3</div><div style="position:absolute;left:441.2px;top:512.0px;width:131.6px;height:45.8px;box-sizing:border-box;border:1.5px solid #0caf60;border-radius:7px"></div><div class="t" style="left:464.90px;top:526px;font-size:17.2px;font-weight:400;color:#0caf60;transform:scaleX(0.8907);-webkit-text-stroke:0.2px #0caf60;">#PUR00014</div><div class="t" style="left:663.45px;top:526px;font-size:17.4px;font-weight:400;color:#293240;transform:scaleX(0.9456);">john</div><div class="t" style="left:846.40px;top:526px;font-size:17.4px;font-weight:400;color:#293240;transform:scaleX(0.9336);">Accounting</div><div class="t" style="left:1049.20px;top:526px;font-size:17.4px;font-weight:400;color:#293240;transform:scaleX(0.9001);">Rent Or Lease</div><div class="t" style="left:1227.70px;top:526px;font-size:17.4px;font-weight:400;color:#293240;transform:scaleX(0.9005);">25-04-2025</div><div style="position:absolute;left:1440.1px;top:521.0px;width:102.8px;height:29px;background:#0caf60;border-radius:5px"></div><div class="t" style="left:1480.15px;top:529px;font-size:11.6px;font-weight:400;color:#fff;transform:scaleX(1.0327);-webkit-text-stroke:0.25px #fff;">Paid</div><div style="position:absolute;left:1619.0px;top:519.0px;width:35px;height:34px;background:#1c2130;border-radius:6px"></div><svg style="position:absolute;left:1628.50px;top:527.00px;" width="16" height="16" viewBox="0 0 24 24" fill="none" stroke="#fff" stroke-width="1.9" stroke-linecap="round" stroke-linejoin="round"><path d="M7 7h-1a2 2 0 0 0 -2 2v9a2 2 0 0 0 2 2h9a2 2 0 0 0 2 -2v-1"/><path d="M20.385 6.585a2.1 2.1 0 0 0 -2.97 -2.97l-8.415 8.385v3h3l8.385 -8.415z"/><path d="M16 5l3 3"/></svg><div style="position:absolute;left:1663.75px;top:519.0px;width:35px;height:34px;background:#0caf60;border-radius:6px"></div><svg style="position:absolute;left:1673.25px;top:527.00px;" width="16" height="16" viewBox="0 0 24 24" fill="none" stroke="#fff" stroke-width="1.9" stroke-linecap="round" stroke-linejoin="round"><path d="M14 3v4a1 1 0 0 0 1 1h4"/><path d="M17 21h-10a2 2 0 0 1 -2 -2v-14a2 2 0 0 1 2 -2h7l5 5v11a2 2 0 0 1 -2 2z"/></svg><div style="position:absolute;left:1708.5px;top:519.0px;width:35px;height:34px;background:#ffa21d;border-radius:6px"></div><svg style="position:absolute;left:1717.25px;top:526.25px;" width="17.5" height="17.5" viewBox="0 0 24 24" fill="none" stroke="#fff" stroke-width="1.9" stroke-linecap="round" stroke-linejoin="round"><path d="M10 12a2 2 0 1 0 4 0a2 2 0 0 0 -4 0"/><path d="M21 12c-2.4 4 -5.4 6 -9 6c-3.6 0 -6.6 -2 -9 -6c2.4 -4 5.4 -6 9 -6c3.6 0 6.6 2 9 6"/></svg><div style="position:absolute;left:341px;top:570.0px;width:1519px;height:2px;background:#eeeff1"></div><div class="t" style="left:369.50px;top:598px;font-size:17.4px;font-weight:400;color:#293240;transform:scaleX(0.7000);">4</div><div style="position:absolute;left:441.2px;top:584.0px;width:131.6px;height:45.8px;box-sizing:border-box;border:1.5px solid #0caf60;border-radius:7px"></div><div class="t" style="left:464.90px;top:598px;font-size:17.2px;font-weight:400;color:#0caf60;transform:scaleX(0.9003);-webkit-text-stroke:0.2px #0caf60;">#PUR00013</div><div class="t" style="left:661.59px;top:598px;font-size:17.4px;font-weight:400;color:#293240;transform:scaleX(0.9053);">Kelly Brook</div><div class="t" style="left:846.40px;top:598px;font-size:17.4px;font-weight:400;color:#293240;transform:scaleX(0.9336);">Accounting</div><div class="t" style="left:1049.20px;top:598px;font-size:17.4px;font-weight:400;color:#293240;transform:scaleX(0.9001);">Rent Or Lease</div><div class="t" style="left:1227.70px;top:598px;font-size:17.4px;font-weight:400;color:#293240;transform:scaleX(0.8904);">01-09-2024</div><div style="position:absolute;left:1440.1px;top:593.0px;width:102.8px;height:29px;background:#6c757d;border-radius:5px"></div><div class="t" style="left:1477.90px;top:601px;font-size:11.6px;font-weight:400;color:#fff;transform:scaleX(1.0810);-webkit-text-stroke:0.25px #fff;">Draft</div><div style="position:absolute;left:1619.0px;top:591.0px;width:35px;height:34px;background:#0caf60;border-radius:6px"></div><svg style="position:absolute;left:1628.50px;top:599.00px;" width="16" height="16" viewBox="0 0 24 24" fill="none" stroke="#fff" stroke-width="1.9" stroke-linecap="round" stroke-linejoin="round"><path d="M14 3v4a1 1 0 0 0 1 1h4"/><path d="M17 21h-10a2 2 0 0 1 -2 -2v-14a2 2 0 0 1 2 -2h7l5 5v11a2 2 0 0 1 -2 2z"/></svg><div style="position:absolute;left:1663.75px;top:591.0px;width:35px;height:34px;background:#ffa21d;border-radius:6px"></div><svg style="position:absolute;left:1672.50px;top:598.25px;" width="17.5" height="17.5" viewBox="0 0 24 24" fill="none" stroke="#fff" stroke-width="1.9" stroke-linecap="round" stroke-linejoin="round"><path d="M10 12a2 2 0 1 0 4 0a2 2 0 0 0 -4 0"/><path d="M21 12c-2.4 4 -5.4 6 -9 6c-3.6 0 -6.6 -2 -9 -6c2.4 -4 5.4 -6 9 -6c3.6 0 6.6 2 9 6"/></svg><div style="position:absolute;left:1708.5px;top:591.0px;width:35px;height:34px;background:#3ec9d6;border-radius:6px"></div><svg style="position:absolute;left:1718.00px;top:599.00px;" width="16" height="16" viewBox="0 0 24 24" fill="none" stroke="#fff" stroke-width="1.9" stroke-linecap="round" stroke-linejoin="round"><path d="M4 20h4l10.5 -10.5a2.828 2.828 0 1 0 -4 -4l-10.5 10.5v4"/><path d="M13.5 6.5l4 4"/></svg><div style="position:absolute;left:1753.25px;top:591.0px;width:35px;height:33px;background:#ff3a6e;border-radius:6px"></div><svg style="position:absolute;left:1762.75px;top:599.00px;" width="16" height="16" viewBox="0 0 24 24" fill="none" stroke="#fff" stroke-width="1.9" stroke-linecap="round" stroke-linejoin="round"><path d="M4 7l16 0"/><path d="M10 11l0 6"/><path d="M14 11l0 6"/><path d="M5 7l1 12a2 2 0 0 0 2 2h8a2 2 0 0 0 2 -2l1 -12"/><path d="M9 7v-3a1 1 0 0 1 1 -1h4a1 1 0 0 1 1 1v3"/></svg><div style="position:absolute;left:341px;top:642.0px;width:1519px;height:2px;background:#eeeff1"></div><div class="t" style="left:369.50px;top:670px;font-size:17.4px;font-weight:400;color:#293240;transform:scaleX(0.7778);">5</div><div style="position:absolute;left:441.2px;top:656.0px;width:131.6px;height:45.8px;box-sizing:border-box;border:1.5px solid #0caf60;border-radius:7px"></div><div class="t" style="left:464.90px;top:670px;font-size:17.2px;font-weight:400;color:#0caf60;transform:scaleX(0.9003);-webkit-text-stroke:0.2px #0caf60;">#PUR00012</div><div class="t" style="left:661.59px;top:670px;font-size:17.4px;font-weight:400;color:#293240;transform:scaleX(0.9053);">Kelly Brook</div><div class="t" style="left:846.40px;top:670px;font-size:17.4px;font-weight:400;color:#293240;transform:scaleX(0.9336);">Accounting</div><div class="t" style="left:1050.10px;top:670px;font-size:17.4px;font-weight:400;color:#293240;transform:scaleX(0.9165);">Travel</div><div class="t" style="left:1227.70px;top:670px;font-size:17.4px;font-weight:400;color:#293240;transform:scaleX(0.8904);">26-08-2024</div><div style="position:absolute;left:1440.1px;top:665.0px;width:102.8px;height:29px;background:#6c757d;border-radius:5px"></div><div class="t" style="left:1477.90px;top:673px;font-size:11.6px;font-weight:400;color:#fff;transform:scaleX(1.0810);-webkit-text-stroke:0.25px #fff;">Draft</div><div style="position:absolute;left:1619.0px;top:663.0px;width:35px;height:34px;background:#1c2130;border-radius:6px"></div><svg style="position:absolute;left:1628.50px;top:671.00px;" width="16" height="16" viewBox="0 0 24 24" fill="none" stroke="#fff" stroke-width="1.9" stroke-linecap="round" stroke-linejoin="round"><path d="M7 7h-1a2 2 0 0 0 -2 2v9a2 2 0 0 0 2 2h9a2 2 0 0 0 2 -2v-1"/><path d="M20.385 6.585a2.1 2.1 0 0 0 -2.97 -2.97l-8.415 8.385v3h3l8.385 -8.415z"/><path d="M16 5l3 3"/></svg><div style="position:absolute;left:1663.75px;top:663.0px;width:35px;height:34px;background:#0caf60;border-radius:6px"></div><svg style="position:absolute;left:1673.25px;top:671.00px;" width="16" height="16" viewBox="0 0 24 24" fill="none" stroke="#fff" stroke-width="1.9" stroke-linecap="round" stroke-linejoin="round"><path d="M14 3v4a1 1 0 0 0 1 1h4"/><path d="M17 21h-10a2 2 0 0 1 -2 -2v-14a2 2 0 0 1 2 -2h7l5 5v11a2 2 0 0 1 -2 2z"/></svg><div style="position:absolute;left:1708.5px;top:663.0px;width:35px;height:34px;background:#ffa21d;border-radius:6px"></div><svg style="position:absolute;left:1717.25px;top:670.25px;" width="17.5" height="17.5" viewBox="0 0 24 24" fill="none" stroke="#fff" stroke-width="1.9" stroke-linecap="round" stroke-linejoin="round"><path d="M10 12a2 2 0 1 0 4 0a2 2 0 0 0 -4 0"/><path d="M21 12c-2.4 4 -5.4 6 -9 6c-3.6 0 -6.6 -2 -9 -6c2.4 -4 5.4 -6 9 -6c3.6 0 6.6 2 9 6"/></svg><div style="position:absolute;left:1753.25px;top:663.0px;width:35px;height:34px;background:#3ec9d6;border-radius:6px"></div><svg style="position:absolute;left:1762.75px;top:671.00px;" width="16" height="16" viewBox="0 0 24 24" fill="none" stroke="#fff" stroke-width="1.9" stroke-linecap="round" stroke-linejoin="round"><path d="M4 20h4l10.5 -10.5a2.828 2.828 0 1 0 -4 -4l-10.5 10.5v4"/><path d="M13.5 6.5l4 4"/></svg><div style="position:absolute;left:1798.0px;top:663.0px;width:35px;height:33px;background:#ff3a6e;border-radius:6px"></div><svg style="position:absolute;left:1807.50px;top:671.00px;" width="16" height="16" viewBox="0 0 24 24" fill="none" stroke="#fff" stroke-width="1.9" stroke-linecap="round" stroke-linejoin="round"><path d="M4 7l16 0"/><path d="M10 11l0 6"/><path d="M14 11l0 6"/><path d="M5 7l1 12a2 2 0 0 0 2 2h8a2 2 0 0 0 2 -2l1 -12"/><path d="M9 7v-3a1 1 0 0 1 1 -1h4a1 1 0 0 1 1 1v3"/></svg><div style="position:absolute;left:341px;top:714.0px;width:1519px;height:2px;background:#eeeff1"></div><div class="t" style="left:369.50px;top:742px;font-size:17.4px;font-weight:400;color:#293240;transform:scaleX(0.7778);">6</div><div style="position:absolute;left:441.2px;top:728.0px;width:131.6px;height:45.8px;box-sizing:border-box;border:1.5px solid #0caf60;border-radius:7px"></div><div class="t" style="left:464.90px;top:742px;font-size:17.2px;font-weight:400;color:#0caf60;transform:scaleX(0.9128);-webkit-text-stroke:0.2px #0caf60;">#PUR00011</div><div class="t" style="left:662.50px;top:742px;font-size:17.4px;font-weight:400;color:#293240;transform:scaleX(0.8835);">Jessica Miranda</div><div class="t" style="left:846.40px;top:742px;font-size:17.4px;font-weight:400;color:#293240;transform:scaleX(0.9336);">Accounting</div><div class="t" style="left:1049.20px;top:742px;font-size:17.4px;font-weight:400;color:#293240;transform:scaleX(0.9001);">Rent Or Lease</div><div class="t" style="left:1226.80px;top:742px;font-size:17.4px;font-weight:400;color:#293240;transform:scaleX(0.9005);">10-09-2024</div><div style="position:absolute;left:1440.1px;top:737.0px;width:102.8px;height:29px;background:#6c757d;border-radius:5px"></div><div class="t" style="left:1477.90px;top:745px;font-size:11.6px;font-weight:400;color:#fff;transform:scaleX(1.0810);-webkit-text-stroke:0.25px #fff;">Draft</div><div style="position:absolute;left:1619.0px;top:735.0px;width:35px;height:34px;background:#1c2130;border-radius:6px"></div><svg style="position:absolute;left:1628.50px;top:743.00px;" width="16" height="16" viewBox="0 0 24 24" fill="none" stroke="#fff" stroke-width="1.9" stroke-linecap="round" stroke-linejoin="round"><path d="M7 7h-1a2 2 0 0 0 -2 2v9a2 2 0 0 0 2 2h9a2 2 0 0 0 2 -2v-1"/><path d="M20.385 6.585a2.1 2.1 0 0 0 -2.97 -2.97l-8.415 8.385v3h3l8.385 -8.415z"/><path d="M16 5l3 3"/></svg><div style="position:absolute;left:1663.75px;top:735.0px;width:35px;height:34px;background:#0caf60;border-radius:6px"></div><svg style="position:absolute;left:1673.25px;top:743.00px;" width="16" height="16" viewBox="0 0 24 24" fill="none" stroke="#fff" stroke-width="1.9" stroke-linecap="round" stroke-linejoin="round"><path d="M14 3v4a1 1 0 0 0 1 1h4"/><path d="M17 21h-10a2 2 0 0 1 -2 -2v-14a2 2 0 0 1 2 -2h7l5 5v11a2 2 0 0 1 -2 2z"/></svg><div style="position:absolute;left:1708.5px;top:735.0px;width:35px;height:34px;background:#ffa21d;border-radius:6px"></div><svg style="position:absolute;left:1717.25px;top:742.25px;" width="17.5" height="17.5" viewBox="0 0 24 24" fill="none" stroke="#fff" stroke-width="1.9" stroke-linecap="round" stroke-linejoin="round"><path d="M10 12a2 2 0 1 0 4 0a2 2 0 0 0 -4 0"/><path d="M21 12c-2.4 4 -5.4 6 -9 6c-3.6 0 -6.6 -2 -9 -6c2.4 -4 5.4 -6 9 -6c3.6 0 6.6 2 9 6"/></svg><div style="position:absolute;left:1753.25px;top:735.0px;width:35px;height:34px;background:#3ec9d6;border-radius:6px"></div><svg style="position:absolute;left:1762.75px;top:743.00px;" width="16" height="16" viewBox="0 0 24 24" fill="none" stroke="#fff" stroke-width="1.9" stroke-linecap="round" stroke-linejoin="round"><path d="M4 20h4l10.5 -10.5a2.828 2.828 0 1 0 -4 -4l-10.5 10.5v4"/><path d="M13.5 6.5l4 4"/></svg><div style="position:absolute;left:1798.0px;top:735.0px;width:35px;height:33px;background:#ff3a6e;border-radius:6px"></div><svg style="position:absolute;left:1807.50px;top:743.00px;" width="16" height="16" viewBox="0 0 24 24" fill="none" stroke="#fff" stroke-width="1.9" stroke-linecap="round" stroke-linejoin="round"><path d="M4 7l16 0"/><path d="M10 11l0 6"/><path d="M14 11l0 6"/><path d="M5 7l1 12a2 2 0 0 0 2 2h8a2 2 0 0 0 2 -2l1 -12"/><path d="M9 7v-3a1 1 0 0 1 1 -1h4a1 1 0 0 1 1 1v3"/></svg><div style="position:absolute;left:341px;top:786.0px;width:1519px;height:2px;background:#eeeff1"></div><div class="t" style="left:369.50px;top:814px;font-size:17.4px;font-weight:400;color:#293240;transform:scaleX(0.7778);">7</div><div style="position:absolute;left:441.2px;top:800.0px;width:131.6px;height:45.8px;box-sizing:border-box;border:1.5px solid #0caf60;border-radius:7px"></div><div class="t" style="left:464.90px;top:814px;font-size:17.2px;font-weight:400;color:#0caf60;transform:scaleX(0.9003);-webkit-text-stroke:0.2px #0caf60;">#PUR00010</div><div class="t" style="left:662.50px;top:814px;font-size:17.4px;font-weight:400;color:#293240;transform:scaleX(0.8972);">Jennifer Ellison</div><div class="t" style="left:846.40px;top:814px;font-size:17.4px;font-weight:400;color:#293240;transform:scaleX(0.9336);">Accounting</div><div class="t" style="left:1050.10px;top:814px;font-size:17.4px;font-weight:400;color:#293240;transform:scaleX(0.9165);">Travel</div><div class="t" style="left:1226.80px;top:814px;font-size:17.4px;font-weight:400;color:#293240;transform:scaleX(0.9005);">10-09-2024</div><div style="position:absolute;left:1440.1px;top:809.0px;width:102.8px;height:29px;background:#6c757d;border-radius:5px"></div><div class="t" style="left:1477.90px;top:817px;font-size:11.6px;font-weight:400;color:#fff;transform:scaleX(1.0810);-webkit-text-stroke:0.25px #fff;">Draft</div><div style="position:absolute;left:1619.0px;top:807.0px;width:35px;height:34px;background:#1c2130;border-radius:6px"></div><svg style="position:absolute;left:1628.50px;top:815.00px;" width="16" height="16" viewBox="0 0 24 24" fill="none" stroke="#fff" stroke-width="1.9" stroke-linecap="round" stroke-linejoin="round"><path d="M7 7h-1a2 2 0 0 0 -2 2v9a2 2 0 0 0 2 2h9a2 2 0 0 0 2 -2v-1"/><path d="M20.385 6.585a2.1 2.1 0 0 0 -2.97 -2.97l-8.415 8.385v3h3l8.385 -8.415z"/><path d="M16 5l3 3"/></svg><div style="position:absolute;left:1663.75px;top:807.0px;width:35px;height:34px;background:#0caf60;border-radius:6px"></div><svg style="position:absolute;left:1673.25px;top:815.00px;" width="16" height="16" viewBox="0 0 24 24" fill="none" stroke="#fff" stroke-width="1.9" stroke-linecap="round" stroke-linejoin="round"><path d="M14 3v4a1 1 0 0 0 1 1h4"/><path d="M17 21h-10a2 2 0 0 1 -2 -2v-14a2 2 0 0 1 2 -2h7l5 5v11a2 2 0 0 1 -2 2z"/></svg><div style="position:absolute;left:1708.5px;top:807.0px;width:35px;height:34px;background:#ffa21d;border-radius:6px"></div><svg style="position:absolute;left:1717.25px;top:814.25px;" width="17.5" height="17.5" viewBox="0 0 24 24" fill="none" stroke="#fff" stroke-width="1.9" stroke-linecap="round" stroke-linejoin="round"><path d="M10 12a2 2 0 1 0 4 0a2 2 0 0 0 -4 0"/><path d="M21 12c-2.4 4 -5.4 6 -9 6c-3.6 0 -6.6 -2 -9 -6c2.4 -4 5.4 -6 9 -6c3.6 0 6.6 2 9 6"/></svg><div style="position:absolute;left:1753.25px;top:807.0px;width:35px;height:34px;background:#3ec9d6;border-radius:6px"></div><svg style="position:absolute;left:1762.75px;top:815.00px;" width="16" height="16" viewBox="0 0 24 24" fill="none" stroke="#fff" stroke-width="1.9" stroke-linecap="round" stroke-linejoin="round"><path d="M4 20h4l10.5 -10.5a2.828 2.828 0 1 0 -4 -4l-10.5 10.5v4"/><path d="M13.5 6.5l4 4"/></svg><div style="position:absolute;left:1798.0px;top:807.0px;width:35px;height:33px;background:#ff3a6e;border-radius:6px"></div><svg style="position:absolute;left:1807.50px;top:815.00px;" width="16" height="16" viewBox="0 0 24 24" fill="none" stroke="#fff" stroke-width="1.9" stroke-linecap="round" stroke-linejoin="round"><path d="M4 7l16 0"/><path d="M10 11l0 6"/><path d="M14 11l0 6"/><path d="M5 7l1 12a2 2 0 0 0 2 2h8a2 2 0 0 0 2 -2l1 -12"/><path d="M9 7v-3a1 1 0 0 1 1 -1h4a1 1 0 0 1 1 1v3"/></svg><div style="position:absolute;left:341px;top:858.0px;width:1519px;height:2px;background:#eeeff1"></div><div class="t" style="left:369.50px;top:886px;font-size:17.4px;font-weight:400;color:#293240;transform:scaleX(0.7778);">8</div><div style="position:absolute;left:441.2px;top:872.0px;width:131.6px;height:45.8px;box-sizing:border-box;border:1.5px solid #0caf60;border-radius:7px"></div><div class="t" style="left:464.90px;top:886px;font-size:17.2px;font-weight:400;color:#0caf60;transform:scaleX(0.9003);-webkit-text-stroke:0.2px #0caf60;">#PUR00009</div><div class="t" style="left:661.58px;top:886px;font-size:17.4px;font-weight:400;color:#293240;transform:scaleX(0.9180);">Rhiannon Benson</div><div class="t" style="left:846.40px;top:886px;font-size:17.4px;font-weight:400;color:#293240;transform:scaleX(0.9336);">Accounting</div><div class="t" style="left:1049.20px;top:886px;font-size:17.4px;font-weight:400;color:#293240;transform:scaleX(0.9001);">Rent Or Lease</div><div class="t" style="left:1226.80px;top:886px;font-size:17.4px;font-weight:400;color:#293240;transform:scaleX(0.9005);">10-09-2024</div><div style="position:absolute;left:1440.1px;top:881.0px;width:102.8px;height:29px;background:#ffa21d;border-radius:5px"></div><div class="t" style="left:1479.40px;top:889px;font-size:11.6px;font-weight:400;color:#fff;transform:scaleX(1.0151);-webkit-text-stroke:0.25px #fff;">Sent</div><div style="position:absolute;left:1619.0px;top:879.0px;width:35px;height:34px;background:#1c2130;border-radius:6px"></div><svg style="position:absolute;left:1628.50px;top:887.00px;" width="16" height="16" viewBox="0 0 24 24" fill="none" stroke="#fff" stroke-width="1.9" stroke-linecap="round" stroke-linejoin="round"><path d="M7 7h-1a2 2 0 0 0 -2 2v9a2 2 0 0 0 2 2h9a2 2 0 0 0 2 -2v-1"/><path d="M20.385 6.585a2.1 2.1 0 0 0 -2.97 -2.97l-8.415 8.385v3h3l8.385 -8.415z"/><path d="M16 5l3 3"/></svg><div style="position:absolute;left:1663.75px;top:879.0px;width:35px;height:34px;background:#0caf60;border-radius:6px"></div><svg style="position:absolute;left:1673.25px;top:887.00px;" width="16" height="16" viewBox="0 0 24 24" fill="none" stroke="#fff" stroke-width="1.9" stroke-linecap="round" stroke-linejoin="round"><path d="M14 3v4a1 1 0 0 0 1 1h4"/><path d="M17 21h-10a2 2 0 0 1 -2 -2v-14a2 2 0 0 1 2 -2h7l5 5v11a2 2 0 0 1 -2 2z"/></svg><div style="position:absolute;left:1708.5px;top:879.0px;width:35px;height:34px;background:#ffa21d;border-radius:6px"></div><svg style="position:absolute;left:1717.25px;top:886.25px;" width="17.5" height="17.5" viewBox="0 0 24 24" fill="none" stroke="#fff" stroke-width="1.9" stroke-linecap="round" stroke-linejoin="round"><path d="M10 12a2 2 0 1 0 4 0a2 2 0 0 0 -4 0"/><path d="M21 12c-2.4 4 -5.4 6 -9 6c-3.6 0 -6.6 -2 -9 -6c2.4 -4 5.4 -6 9 -6c3.6 0 6.6 2 9 6"/></svg><div style="position:absolute;left:1753.25px;top:879.0px;width:35px;height:34px;background:#3ec9d6;border-radius:6px"></div><svg style="position:absolute;left:1762.75px;top:887.00px;" width="16" height="16" viewBox="0 0 24 24" fill="none" stroke="#fff" stroke-width="1.9" stroke-linecap="round" stroke-linejoin="round"><path d="M4 20h4l10.5 -10.5a2.828 2.828 0 1 0 -4 -4l-10.5 10.5v4"/><path d="M13.5 6.5l4 4"/></svg><div style="position:absolute;left:1798.0px;top:879.0px;width:35px;height:33px;background:#ff3a6e;border-radius:6px"></div><svg style="position:absolute;left:1807.50px;top:887.00px;" width="16" height="16" viewBox="0 0 24 24" fill="none" stroke="#fff" stroke-width="1.9" stroke-linecap="round" stroke-linejoin="round"><path d="M4 7l16 0"/><path d="M10 11l0 6"/><path d="M14 11l0 6"/><path d="M5 7l1 12a2 2 0 0 0 2 2h8a2 2 0 0 0 2 -2l1 -12"/><path d="M9 7v-3a1 1 0 0 1 1 -1h4a1 1 0 0 1 1 1v3"/></svg><div style="position:absolute;left:341px;top:930.0px;width:1519px;height:2px;background:#eeeff1"></div><div class="t" style="left:369.50px;top:958px;font-size:17.4px;font-weight:400;color:#293240;transform:scaleX(0.7778);">9</div><div style="position:absolute;left:441.2px;top:944.0px;width:131.6px;height:45.8px;box-sizing:border-box;border:1.5px solid #0caf60;border-radius:7px"></div><div class="t" style="left:464.90px;top:958px;font-size:17.2px;font-weight:400;color:#0caf60;transform:scaleX(0.9003);-webkit-text-stroke:0.2px #0caf60;">#PUR00008</div><div class="t" style="left:662.50px;top:958px;font-size:17.4px;font-weight:400;color:#293240;transform:scaleX(0.8835);">Jessica Miranda</div><div class="t" style="left:846.40px;top:958px;font-size:17.4px;font-weight:400;color:#293240;transform:scaleX(0.9336);">Accounting</div><div class="t" style="left:1050.10px;top:958px;font-size:17.4px;font-weight:400;color:#293240;transform:scaleX(0.9165);">Travel</div><div class="t" style="left:1226.80px;top:958px;font-size:17.4px;font-weight:400;color:#293240;transform:scaleX(0.9005);">10-09-2024</div><div style="position:absolute;left:1440.1px;top:953.0px;width:102.8px;height:29px;background:#6c757d;border-radius:5px"></div><div class="t" style="left:1477.90px;top:961px;font-size:11.6px;font-weight:400;color:#fff;transform:scaleX(1.0810);-webkit-text-stroke:0.25px #fff;">Draft</div><div style="position:absolute;left:1619.0px;top:951.0px;width:35px;height:34px;background:#1c2130;border-radius:6px"></div><svg style="position:absolute;left:1628.50px;top:959.00px;" width="16" height="16" viewBox="0 0 24 24" fill="none" stroke="#fff" stroke-width="1.9" stroke-linecap="round" stroke-linejoin="round"><path d="M7 7h-1a2 2 0 0 0 -2 2v9a2 2 0 0 0 2 2h9a2 2 0 0 0 2 -2v-1"/><path d="M20.385 6.585a2.1 2.1 0 0 0 -2.97 -2.97l-8.415 8.385v3h3l8.385 -8.415z"/><path d="M16 5l3 3"/></svg><div style="position:absolute;left:1663.75px;top:951.0px;width:35px;height:34px;background:#0caf60;border-radius:6px"></div><svg style="position:absolute;left:1673.25px;top:959.00px;" width="16" height="16" viewBox="0 0 24 24" fill="none" stroke="#fff" stroke-width="1.9" stroke-linecap="round" stroke-linejoin="round"><path d="M14 3v4a1 1 0 0 0 1 1h4"/><path d="M17 21h-10a2 2 0 0 1 -2 -2v-14a2 2 0 0 1 2 -2h7l5 5v11a2 2 0 0 1 -2 2z"/></svg><div style="position:absolute;left:1708.5px;top:951.0px;width:35px;height:34px;background:#ffa21d;border-radius:6px"></div><svg style="position:absolute;left:1717.25px;top:958.25px;" width="17.5" height="17.5" viewBox="0 0 24 24" fill="none" stroke="#fff" stroke-width="1.9" stroke-linecap="round" stroke-linejoin="round"><path d="M10 12a2 2 0 1 0 4 0a2 2 0 0 0 -4 0"/><path d="M21 12c-2.4 4 -5.4 6 -9 6c-3.6 0 -6.6 -2 -9 -6c2.4 -4 5.4 -6 9 -6c3.6 0 6.6 2 9 6"/></svg><div style="position:absolute;left:1753.25px;top:951.0px;width:35px;height:34px;background:#3ec9d6;border-radius:6px"></div><svg style="position:absolute;left:1762.75px;top:959.00px;" width="16" height="16" viewBox="0 0 24 24" fill="none" stroke="#fff" stroke-width="1.9" stroke-linecap="round" stroke-linejoin="round"><path d="M4 20h4l10.5 -10.5a2.828 2.828 0 1 0 -4 -4l-10.5 10.5v4"/><path d="M13.5 6.5l4 4"/></svg><div style="position:absolute;left:1798.0px;top:951.0px;width:35px;height:33px;background:#ff3a6e;border-radius:6px"></div><svg style="position:absolute;left:1807.50px;top:959.00px;" width="16" height="16" viewBox="0 0 24 24" fill="none" stroke="#fff" stroke-width="1.9" stroke-linecap="round" stroke-linejoin="round"><path d="M4 7l16 0"/><path d="M10 11l0 6"/><path d="M14 11l0 6"/><path d="M5 7l1 12a2 2 0 0 0 2 2h8a2 2 0 0 0 2 -2l1 -12"/><path d="M9 7v-3a1 1 0 0 1 1 -1h4a1 1 0 0 1 1 1v3"/></svg><div style="position:absolute;left:341px;top:1002.0px;width:1519px;height:2px;background:#eeeff1"></div><div class="t" style="left:368.41px;top:1030px;font-size:17.4px;font-weight:400;color:#293240;transform:scaleX(0.8941);">10</div><div style="position:absolute;left:441.2px;top:1016.0px;width:131.6px;height:45.8px;box-sizing:border-box;border:1.5px solid #0caf60;border-radius:7px"></div><div class="t" style="left:464.90px;top:1030px;font-size:17.2px;font-weight:400;color:#0caf60;transform:scaleX(0.9003);-webkit-text-stroke:0.2px #0caf60;">#PUR00007</div><div class="t" style="left:661.58px;top:1030px;font-size:17.4px;font-weight:400;color:#293240;transform:scaleX(0.9173);">Ira Bradley</div><div class="t" style="left:846.40px;top:1030px;font-size:17.4px;font-weight:400;color:#293240;transform:scaleX(0.9336);">Accounting</div><div class="t" style="left:1049.20px;top:1030px;font-size:17.4px;font-weight:400;color:#293240;transform:scaleX(0.9001);">Rent Or Lease</div><div class="t" style="left:1227.70px;top:1030px;font-size:17.4px;font-weight:400;color:#293240;transform:scaleX(0.8904);">03-10-2024</div><div style="position:absolute;left:1440.1px;top:1025.0px;width:102.8px;height:29px;background:#6c757d;border-radius:5px"></div><div class="t" style="left:1477.90px;top:1033px;font-size:11.6px;font-weight:400;color:#fff;transform:scaleX(1.0810);-webkit-text-stroke:0.25px #fff;">Draft</div><div style="position:absolute;left:1619.0px;top:1023.0px;width:35px;height:34px;background:#1c2130;border-radius:6px"></div><svg style="position:absolute;left:1628.50px;top:1031.00px;" width="16" height="16" viewBox="0 0 24 24" fill="none" stroke="#fff" stroke-width="1.9" stroke-linecap="round" stroke-linejoin="round"><path d="M7 7h-1a2 2 0 0 0 -2 2v9a2 2 0 0 0 2 2h9a2 2 0 0 0 2 -2v-1"/><path d="M20.385 6.585a2.1 2.1 0 0 0 -2.97 -2.97l-8.415 8.385v3h3l8.385 -8.415z"/><path d="M16 5l3 3"/></svg><div style="position:absolute;left:1663.75px;top:1023.0px;width:35px;height:34px;background:#0caf60;border-radius:6px"></div><svg style="position:absolute;left:1673.25px;top:1031.00px;" width="16" height="16" viewBox="0 0 24 24" fill="none" stroke="#fff" stroke-width="1.9" stroke-linecap="round" stroke-linejoin="round"><path d="M14 3v4a1 1 0 0 0 1 1h4"/><path d="M17 21h-10a2 2 0 0 1 -2 -2v-14a2 2 0 0 1 2 -2h7l5 5v11a2 2 0 0 1 -2 2z"/></svg><div style="position:absolute;left:1708.5px;top:1023.0px;width:35px;height:34px;background:#ffa21d;border-radius:6px"></div><svg style="position:absolute;left:1717.25px;top:1030.25px;" width="17.5" height="17.5" viewBox="0 0 24 24" fill="none" stroke="#fff" stroke-width="1.9" stroke-linecap="round" stroke-linejoin="round"><path d="M10 12a2 2 0 1 0 4 0a2 2 0 0 0 -4 0"/><path d="M21 12c-2.4 4 -5.4 6 -9 6c-3.6 0 -6.6 -2 -9 -6c2.4 -4 5.4 -6 9 -6c3.6 0 6.6 2 9 6"/></svg><div style="position:absolute;left:1753.25px;top:1023.0px;width:35px;height:34px;background:#3ec9d6;border-radius:6px"></div><svg style="position:absolute;left:1762.75px;top:1031.00px;" width="16" height="16" viewBox="0 0 24 24" fill="none" stroke="#fff" stroke-width="1.9" stroke-linecap="round" stroke-linejoin="round"><path d="M4 20h4l10.5 -10.5a2.828 2.828 0 1 0 -4 -4l-10.5 10.5v4"/><path d="M13.5 6.5l4 4"/></svg><div style="position:absolute;left:1798.0px;top:1023.0px;width:35px;height:33px;background:#ff3a6e;border-radius:6px"></div><svg style="position:absolute;left:1807.50px;top:1031.00px;" width="16" height="16" viewBox="0 0 24 24" fill="none" stroke="#fff" stroke-width="1.9" stroke-linecap="round" stroke-linejoin="round"><path d="M4 7l16 0"/><path d="M10 11l0 6"/><path d="M14 11l0 6"/><path d="M5 7l1 12a2 2 0 0 0 2 2h8a2 2 0 0 0 2 -2l1 -12"/><path d="M9 7v-3a1 1 0 0 1 1 -1h4a1 1 0 0 1 1 1v3"/></svg><div style="position:absolute;left:341px;top:1074.0px;width:1519px;height:2px;background:#eeeff1"></div>
</body></html>
